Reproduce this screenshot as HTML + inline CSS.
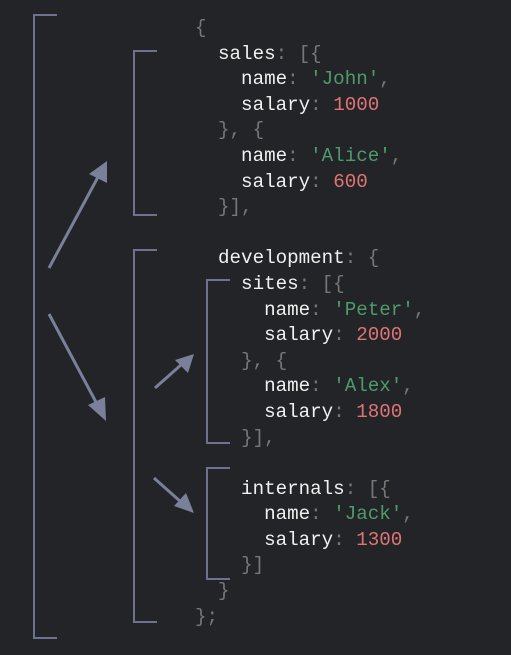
<!DOCTYPE html>
<html><head><style>
html,body{margin:0;padding:0;background:#232428;width:511px;height:655px;overflow:hidden}
pre{position:absolute;left:195px;top:16px;margin:0;font-family:"Liberation Mono","DejaVu Sans Mono",monospace;font-size:19.2px;line-height:25.6px;color:#f0f0f0}
.p{color:#777}.s{color:#4f9a6b}.n{color:#e07474}
svg{position:absolute;left:0;top:0}
</style></head><body>
<svg width="511" height="655">
<g fill="none" stroke="#6e7290" stroke-width="2">
<polyline points="57,15 34,15 34,638 57,638"/>
<polyline points="157,51 134,51 134,215 157,215"/>
<polyline points="157,250 134,250 134,622 157,622"/>
<polyline points="230,280 207,280 207,443 230,443"/>
<polyline points="230,468 207,468 207,579 230,579"/>
</g>
<g stroke="#7a7f9a" stroke-width="3" fill="#7a7f9a">
<line x1="49" y1="268" x2="98" y2="177"/>
<line x1="49" y1="314" x2="97" y2="404"/>
<line x1="155" y1="388" x2="182" y2="364"/>
<line x1="154" y1="478" x2="181" y2="502"/>
</g>
<g fill="#7a7f9a">
<polygon points="107,161 89,174 107,183"/>
<polygon points="106,421 88,405 105,397"/>
<polygon points="194,354 175,360 188,373"/>
<polygon points="194,513 174,506 186,493"/>
</g>
</svg>
<pre><span class="p">{</span>
  sales<span class="p">: [{</span>
    name<span class="p">:</span> <span class="s">'John'</span><span class="p">,</span>
    salary<span class="p">:</span> <span class="n">1000</span>
  <span class="p">}, {</span>
    name<span class="p">:</span> <span class="s">'Alice'</span><span class="p">,</span>
    salary<span class="p">:</span> <span class="n">600</span>
  <span class="p">}],</span>

  development<span class="p">: {</span>
    sites<span class="p">: [{</span>
      name<span class="p">:</span> <span class="s">'Peter'</span><span class="p">,</span>
      salary<span class="p">:</span> <span class="n">2000</span>
    <span class="p">}, {</span>
      name<span class="p">:</span> <span class="s">'Alex'</span><span class="p">,</span>
      salary<span class="p">:</span> <span class="n">1800</span>
    <span class="p">}],</span>

    internals<span class="p">: [{</span>
      name<span class="p">:</span> <span class="s">'Jack'</span><span class="p">,</span>
      salary<span class="p">:</span> <span class="n">1300</span>
    <span class="p">}]</span>
  <span class="p">}</span>
<span class="p">};</span></pre>
</body></html>
